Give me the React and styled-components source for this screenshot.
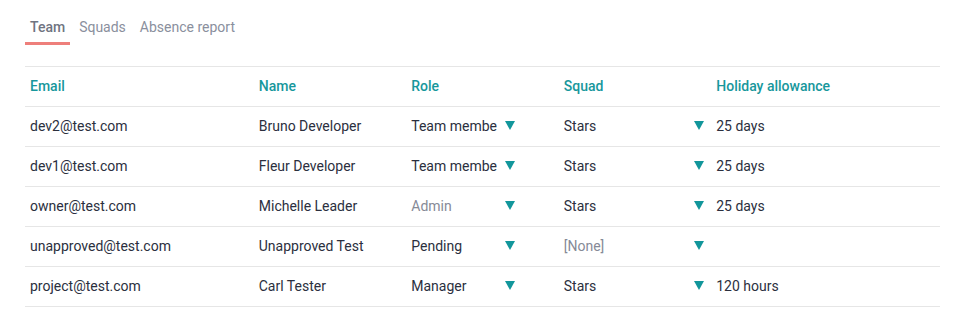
import styled, { createGlobalStyle } from 'styled-components'

const GlobalStyle = createGlobalStyle`
  body {
    margin: 0;
    background: #fff;
    font-family: Roboto, "Liberation Sans", sans-serif;
    color: #2b2f3e;
  }
`

const people = [
  { email: 'dev2@test.com', name: 'Bruno Developer', role: 'Team member', squad: 'Stars', allowance: '25 days' },
  { email: 'dev1@test.com', name: 'Fleur Developer', role: 'Team member', squad: 'Stars', allowance: '25 days' },
  { email: 'owner@test.com', name: 'Michelle Leader', role: 'Admin', roleMuted: true, squad: 'Stars', allowance: '25 days' },
  { email: 'unapproved@test.com', name: 'Unapproved Test', role: 'Pending', squad: '[None]', squadMuted: true, allowance: '' },
  { email: 'project@test.com', name: 'Carl Tester', role: 'Manager', squad: 'Stars', allowance: '120 hours' },
]

function Arrow() {
  return (
    <svg width="10" height="9" viewBox="0 0 10 9">
      <path d="M0 0 L10 0 L5 9 Z" fill="#12969b" />
    </svg>
  )
}

export default function App() {
  return (
    <Page>
      <GlobalStyle />
      <Tabs>
        <Tab active>Team</Tab>
        <Tab>Squads</Tab>
        <Tab>Absence report</Tab>
      </Tabs>
      <Table>
        <Row header>
          <Cell>Email</Cell>
          <Cell>Name</Cell>
          <Cell>Role</Cell>
          <Cell>Squad</Cell>
          <Cell>Holiday allowance</Cell>
        </Row>
        {people.map(p => (
          <Row key={p.email}>
            <Cell>{p.email}</Cell>
            <Cell>{p.name}</Cell>
            <Cell>
              <Select width={104}>
                <SelectText muted={p.roleMuted}>{p.role}</SelectText>
                <Arrow />
              </Select>
            </Cell>
            <Cell>
              <Select width={140}>
                <SelectText muted={p.squadMuted}>{p.squad}</SelectText>
                <Arrow />
              </Select>
            </Cell>
            <Cell>{p.allowance}</Cell>
          </Row>
        ))}
      </Table>
    </Page>
  )
}

const Page = styled.div`
  padding: 16px 13px 0 25px;
`

const Tabs = styled.div`
  display: flex;
  gap: 4px;
  height: 29px;
  margin-bottom: 21px;
`

const Tab = styled.div`
  font-size: 14px;
  padding: 3px 5px 0;
  color: ${p => (p.active ? '#6f7481' : '#8a8f9d')};
  font-weight: ${p => (p.active ? 500 : 400)};
  border-bottom: 3px solid ${p => (p.active ? '#ee7f7b' : 'transparent')};
  height: 23px;
`

const Table = styled.div`
  border-top: 1px solid #e6e6e6;
`

const Row = styled.div`
  display: grid;
  grid-template-columns: 1.5fr 1fr 1fr 1fr 1.5fr;
  box-sizing: border-box;
  height: 40px;
  padding-bottom: 2px;
  align-items: center;
  border-bottom: 1px solid #e6e6e6;
  font-size: 14px;
  color: ${p => (p.header ? '#17979c' : '#2b2f3e')};
  font-weight: ${p => (p.header ? 500 : 400)};
`

const Cell = styled.div`
  padding: 0 5px;
  white-space: nowrap;
  overflow: hidden;
`

const Select = styled.div`
  display: flex;
  align-items: center;
  width: ${p => p.width}px;
`

const SelectText = styled.span`
  flex: 1;
  overflow: hidden;
  white-space: nowrap;
  margin-right: 8px;
  color: ${p => (p.muted ? '#868a97' : '#2b2f3e')};
`
